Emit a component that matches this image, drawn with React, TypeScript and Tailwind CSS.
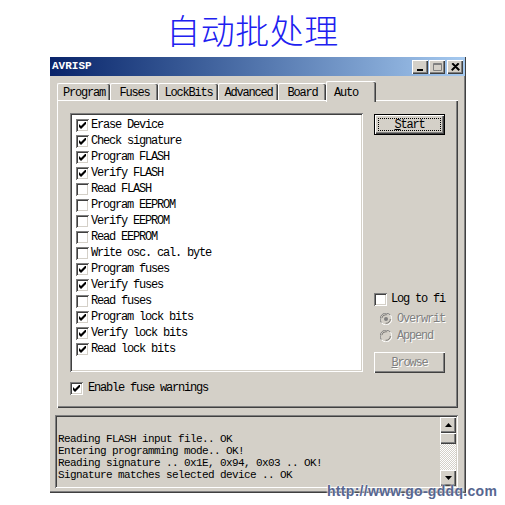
import React from 'react';

const mono = "font-['Liberation_Mono',monospace] text-[12px] tracking-[-1.2px]";
const monoSmall = "font-['Liberation_Mono',monospace] text-[11px] tracking-[-0.6px]";
const raised = "bg-[#d4d0c8] shadow-[inset_1px_1px_#ffffff,inset_-1px_-1px_#404040,inset_-2px_-2px_#808080]";
const sunken = "shadow-[inset_1px_1px_#808080,inset_-1px_-1px_#ffffff,inset_2px_2px_#404040,inset_-2px_-2px_#d4d0c8]";
const disabledText = "text-[#808080] [text-shadow:1px_1px_0_#ffffff]";

const items = [
  { label: 'Erase Device', on: true },
  { label: 'Check signature', on: true },
  { label: 'Program FLASH', on: true },
  { label: 'Verify FLASH', on: true },
  { label: 'Read FLASH', on: false },
  { label: 'Program EEPROM', on: false },
  { label: 'Verify EEPROM', on: false },
  { label: 'Read EEPROM', on: false },
  { label: 'Write osc. cal. byte', on: false },
  { label: 'Program fuses', on: true },
  { label: 'Verify fuses', on: true },
  { label: 'Read fuses', on: false },
  { label: 'Program lock bits', on: true },
  { label: 'Verify lock bits', on: true },
  { label: 'Read lock bits', on: true },
];

const tabs = [
  { label: 'Program', w: 'w-[53px]' },
  { label: 'Fuses', w: 'w-[48px]' },
  { label: 'LockBits', w: 'w-[60px]' },
  { label: 'Advanced', w: 'w-[60px]' },
  { label: 'Board', w: 'w-[48px]' },
];

const log = [
  '',
  'Reading FLASH input file.. OK',
  'Entering programming mode.. OK!',
  'Reading signature .. 0x1E, 0x94, 0x03 .. OK!',
  'Signature matches selected device .. OK',
];

function Check({ on }: { on: boolean }) {
  return (
    <span className={`w-[13px] h-[13px] bg-white shrink-0 flex items-center justify-center ${sunken}`}>
      {on && (
        <svg width="7" height="7" viewBox="0 0 7 7">
          <path d="M0 2 L2 4 L6 0 L7 0 L7 2 L2 7 L0 5 Z" fill="#000" />
        </svg>
      )}
    </span>
  );
}

function Radio({ on }: { on: boolean }) {
  return (
    <svg width="12" height="12" viewBox="0 0 12 12" className="shrink-0">
      <path d="M10.5 2.2 A5.5 5.5 0 0 0 1.5 9.8" stroke="#808080" fill="none" />
      <path d="M1.5 9.8 A5.5 5.5 0 0 0 10.5 2.2" stroke="#ffffff" fill="none" />
      <circle cx="6" cy="6" r="4.3" fill="#d4d0c8" stroke="#404040" strokeWidth="0.6" strokeDasharray="7 7" />
      {on && <circle cx="6" cy="6" r="2" fill="#808080" />}
    </svg>
  );
}

function TitleButton({ kind }: { kind: 'min' | 'max' | 'close' }) {
  return (
    <span className={`w-[16px] h-[14px] flex items-center justify-center ${raised}`}>
      <svg width="9" height="8" viewBox="0 0 9 8">
        {kind === 'min' && <rect x="1" y="6" width="6" height="2" fill="#000" />}
        {kind === 'max' && (
          <path d="M0.5 0.5 H8.5 V7.5 H0.5 Z M0.5 1.5 H8.5" stroke="#808080" fill="none" />
        )}
        {kind === 'close' && <path d="M1 0.5 L8 7.5 M8 0.5 L1 7.5 M2 0.5 L8.5 7 M7 0.5 L0.5 7" stroke="#000" strokeWidth="1.2" />}
      </svg>
    </span>
  );
}

export default function App() {
  return (
    <div className="relative w-[505px] h-[505px] bg-white overflow-hidden">
      <div className="h-[57px] flex items-center justify-center pt-[3px]">
        <span className="font-['Noto_Sans_CJK_SC',sans-serif] font-light text-[34px] leading-none tracking-[0.5px] text-[#2020f0]">自动批处理</span>
      </div>

      <div className="ml-[49px] w-[417px] h-[436px] bg-[#d4d0c8] shadow-[inset_1px_0_#ffffff,inset_-1px_-1px_#404040,inset_-2px_-2px_#808080]">
        <div className="mx-[1px] h-[19px] bg-gradient-to-r from-[#0a246a] to-[#a6caf0] flex items-center justify-between pl-[2px] pr-[2px]">
          <span className="font-['Liberation_Mono',monospace] font-bold text-[11px] text-white">AVRISP</span>
          <div className="flex items-center">
            <TitleButton kind="min" />
            <span className="ml-[1px]"><TitleButton kind="max" /></span>
            <span className="ml-[2px]"><TitleButton kind="close" /></span>
          </div>
        </div>

        <div className="pl-[8px] pr-[8px] pt-[5px]">
          <div className={`flex items-end h-[19px] relative z-10 ${mono}`}>
            {tabs.map((t) => (
              <div
                key={t.label}
                className={`${t.w} h-[17px] pt-[2px] border-t border-l border-white rounded-t-[2px] shadow-[inset_-1px_0_#404040,inset_-2px_0_#808080] flex items-center justify-center leading-none`}
              >
                {t.label}
              </div>
            ))}
            <div className="w-[50px] h-[21px] mb-[-2px] bg-[#d4d0c8] border-t border-l border-white rounded-t-[2px] shadow-[inset_-1px_0_#404040,inset_-2px_0_#808080] pl-[7px] pt-[5px] leading-none">
              Auto
            </div>
          </div>

          <div className="h-[308px] border-t border-l border-white shadow-[inset_-1px_-1px_#404040,inset_-2px_-2px_#808080] pl-[12px] pt-[12px]">
            <div className="flex">
              <div>
                <div className={`w-[293px] h-[259px] bg-white pt-[4px] pl-[6px] ${sunken}`}>
                  {items.map((it) => (
                    <div key={it.label} className={`h-[16px] flex items-center gap-[2px] ${mono}`}>
                      <Check on={it.on} />
                      <span>{it.label}</span>
                    </div>
                  ))}
                </div>
                <div className={`mt-[7px] flex items-center gap-[5px] ${mono}`}>
                  <Check on={true} />
                  <span>Enable fuse warnings</span>
                </div>
              </div>

              <div className="ml-[11px] w-[71px] flex flex-col">
                <div className="mt-[1px] h-[21px] bg-black p-[1px]">
                  <div className={`w-full h-full p-[3px] ${raised}`}>
                    <div className={`w-full h-full border border-dotted border-black flex items-center justify-center leading-none ${mono}`}>
                      <span><span className="underline">S</span>tart</span>
                    </div>
                  </div>
                </div>

                <div className={`mt-[156px] h-[16px] flex items-center gap-[4px] whitespace-nowrap ${mono}`}>
                  <Check on={false} />
                  <span>Log to fi</span>
                </div>
                <div className={`mt-[4px] h-[16px] pl-[6px] flex items-center gap-[5px] whitespace-nowrap ${mono} ${disabledText}`}>
                  <Radio on={true} />
                  <span>Overwrit</span>
                </div>
                <div className={`mt-[1px] h-[16px] pl-[6px] flex items-center gap-[5px] whitespace-nowrap ${mono} ${disabledText}`}>
                  <Radio on={false} />
                  <span>Append</span>
                </div>

                <div className={`mt-[8px] h-[21px] flex items-center justify-center leading-none ${raised} ${mono} ${disabledText}`}>
                  <span><span className="underline">B</span>rowse</span>
                </div>
              </div>
            </div>
          </div>

          <div className={`-ml-[2px] mt-[7px] w-[403px] h-[73px] bg-[#d4d0c8] p-[2px] flex ${sunken}`}>
            <div className={`flex-1 pt-[4px] pl-[1px] leading-[12px] whitespace-pre ${monoSmall}`}>
              {log.map((l, i) => (
                <div key={i} className="h-[12px]">{l}</div>
              ))}
            </div>
            <div className="w-[16px] flex flex-col">
              <div className={`h-[16px] flex items-center justify-center ${raised}`}>
                <svg width="7" height="4" viewBox="0 0 7 4"><path d="M3.5 0 L7 4 H0 Z" fill="#000" /></svg>
              </div>
              <div className={`h-[11px] ${raised}`} />
              <div className="flex-1 bg-[repeating-conic-gradient(#d4d0c8_0_25%,#ffffff_0_50%)] bg-[length:2px_2px]" />
              <div className={`h-[16px] flex items-center justify-center ${raised}`}>
                <svg width="7" height="4" viewBox="0 0 7 4"><path d="M0 0 H7 L3.5 4 Z" fill="#000" /></svg>
              </div>
            </div>
          </div>
        </div>
      </div>

      <div className="absolute left-[327px] top-[481px] font-['Liberation_Sans',sans-serif] font-bold text-[14px] tracking-[0.3px] text-[#566690] [text-shadow:0_0_2px_#ffffff,0_0_2px_#ffffff]">
        http://www.go-gddq.com
      </div>
    </div>
  );
}
